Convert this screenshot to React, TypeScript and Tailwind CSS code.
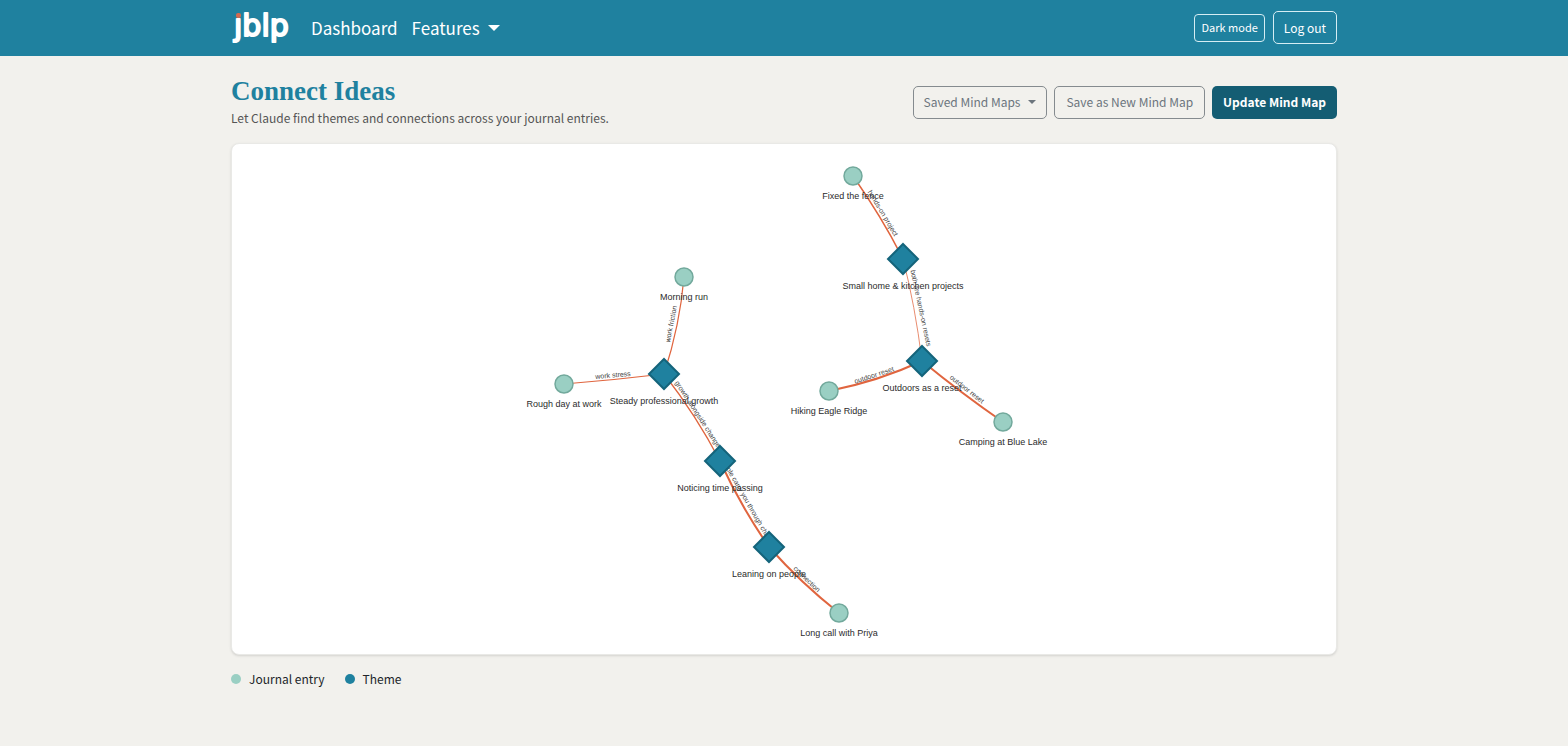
import React from 'react';

interface MapNode {
  id: string;
  label: string;
  x: number;
  y: number;
  kind: 'entry' | 'theme';
}

interface MapEdge {
  id: string;
  path: string;
  width: number;
  label: string;
  x: number;
  y: number;
  angle: number;
}

// Positions are in the canvas' own coordinates
const nodes: MapNode[] = [
  { id: 'fence', label: 'Fixed the fence', x: 622, y: 33, kind: 'entry' },
  { id: 'run', label: 'Morning run', x: 453, y: 134, kind: 'entry' },
  { id: 'rough', label: 'Rough day at work', x: 333, y: 241, kind: 'entry' },
  { id: 'hiking', label: 'Hiking Eagle Ridge', x: 598, y: 248, kind: 'entry' },
  { id: 'camping', label: 'Camping at Blue Lake', x: 772, y: 279, kind: 'entry' },
  { id: 'priya', label: 'Long call with Priya', x: 608, y: 470, kind: 'entry' },
  { id: 'home', label: 'Small home & kitchen projects', x: 672, y: 116, kind: 'theme' },
  { id: 'outdoors', label: 'Outdoors as a reset', x: 691, y: 218, kind: 'theme' },
  { id: 'growth', label: 'Steady professional growth', x: 433, y: 231, kind: 'theme' },
  { id: 'time', label: 'Noticing time passing', x: 489, y: 318, kind: 'theme' },
  { id: 'people', label: 'Leaning on people', x: 538, y: 404, kind: 'theme' },
];

const edges: MapEdge[] = [
  { id: 'e1', path: 'M622 33 Q652 76 672 116', width: 1.5, label: 'hands-on project', x: 652, y: 70, angle: 59 },
  { id: 'e2', path: 'M672 116 Q684 162 691 218', width: 0.75, label: 'both are hands-on resets', x: 690, y: 165, angle: 78 },
  { id: 'e3', path: 'M598 248 Q648 238 691 218', width: 2, label: 'outdoor reset', x: 643, y: 232, angle: -18 },
  { id: 'e4', path: 'M691 218 Q730 250 772 279', width: 2, label: 'outdoor reset', x: 736, y: 246, angle: 38 },
  { id: 'e5', path: 'M453 134 Q449 182 433 231', width: 1.25, label: 'work friction', x: 440, y: 181, angle: -79 },
  { id: 'e6', path: 'M333 241 Q383 237 433 231', width: 1.25, label: 'work stress', x: 382, y: 232, angle: -5 },
  { id: 'e7', path: 'M433 231 Q465 272 489 318', width: 1.25, label: 'growth alongside change', x: 467, y: 271, angle: 57 },
  { id: 'e8', path: 'M489 318 Q509 362 538 404', width: 2, label: 'people carry you through change', x: 517, y: 359, angle: 60 },
  { id: 'e9', path: 'M538 404 Q570 440 608 470', width: 2, label: 'connection', x: 576, y: 436, angle: 44 },
];

const Caret = ({ className }: { className: string }) => (
  <svg viewBox="0 0 10 5" className={className} aria-hidden="true">
    <path d="M0 0h10L5 5z" fill="currentColor" />
  </svg>
);

const Logo = () => (
  <svg viewBox="0 0 60 44" className="h-11 w-[60px]" role="img" aria-label="jblp">
    <text
      x="3"
      y="30"
      fontSize="30"
      fill="#fff"
      stroke="#fff"
      strokeWidth="2"
      strokeLinejoin="round"
      className="font-['DejaVu_Sans',sans-serif]"
    >
      jblp
    </text>
    <rect x="3" y="4" width="8" height="8" fill="#1f819f" />
    <rect x="5" y="7" width="5" height="5" rx="2" fill="#d4694f" />
  </svg>
);

const Navbar = () => (
  <nav className="border-b border-[#1f819f] bg-[#1f819f] text-white">
    <div className="mx-auto flex h-[55px] max-w-[1130px] items-center px-3">
      <a href="#" className="mr-5">
        <Logo />
      </a>
      <a href="#" className="mr-3.5 text-[17px]">
        Dashboard
      </a>
      <button type="button" className="flex items-center gap-2 text-[17px]">
        Features
        <Caret className="w-3" />
      </button>
      <div className="ml-auto flex items-center gap-2">
        <button type="button" className="h-7 rounded border border-[#d5edf3] px-1.5 text-[11px]">
          Dark mode
        </button>
        <button type="button" className="h-[33px] rounded-[5px] border border-[#d5edf3] px-2.5 text-xs">
          Log out
        </button>
      </div>
    </div>
  </nav>
);

const PageHeader = () => (
  <header className="flex items-center justify-between">
    <div>
      <h1 className="font-['Liberation_Serif',serif] text-[27px] leading-8 font-bold text-[#1f819f]">
        Connect Ideas
      </h1>
      <p className="text-xs leading-[22px] text-[#555]">
        Let Claude find themes and connections across your journal entries.
      </p>
    </div>
    <div className="flex gap-[7px] text-xs">
      <button
        type="button"
        className="flex h-[33px] items-center gap-2 rounded-[5px] border border-[#858b8f] px-2.5 text-[#6c757d]"
      >
        Saved Mind Maps
        <Caret className="w-2" />
      </button>
      <button type="button" className="h-[33px] rounded-[5px] border border-[#858b8f] px-[11px] text-[#6c757d]">
        Save as New Mind Map
      </button>
      <button type="button" className="h-[33px] rounded-[5px] bg-[#145d73] px-[11px] font-bold text-white">
        Update Mind Map
      </button>
    </div>
  </header>
);

const MindMap = () => (
  <section className="mt-3.5 overflow-hidden rounded-lg border border-[#e9e9e6] bg-white shadow-sm">
    <svg
      viewBox="1 1 1104 510"
      className="h-[510px] w-full font-['Liberation_Sans',sans-serif]"
      role="img"
      aria-label="Mind map of journal entries and themes"
    >
      {edges.map((edge) => (
        <g key={edge.id}>
          <path d={edge.path} fill="none" stroke="#e0653f" strokeWidth={edge.width} />
          <text
            x={edge.x}
            y={edge.y}
            fontSize="7"
            fill="#444"
            textAnchor="middle"
            dominantBaseline="central"
            transform={`rotate(${edge.angle} ${edge.x} ${edge.y})`}
          >
            {edge.label}
          </text>
        </g>
      ))}
      {nodes.map((node) =>
        node.kind === 'theme' ? (
          <g key={node.id}>
            <path
              d={`M${node.x} ${node.y - 15}l15 15l-15 15l-15-15z`}
              fill="#1f819f"
              stroke="#14647b"
              strokeWidth="2"
            />
            <text x={node.x} y={node.y + 30} fontSize="9" fill="#2b2b2b" textAnchor="middle">
              {node.label}
            </text>
          </g>
        ) : (
          <g key={node.id}>
            <circle cx={node.x} cy={node.y} r="9" fill="#9acfc3" stroke="#72a99c" strokeWidth="1.5" />
            <text x={node.x} y={node.y + 23} fontSize="9" fill="#2b2b2b" textAnchor="middle">
              {node.label}
            </text>
          </g>
        ),
      )}
    </svg>
  </section>
);

const Legend = () => (
  <ul className="mt-3.5 flex gap-5 text-xs leading-5 text-[#212529]">
    <li className="flex items-center gap-2">
      <span className="size-2.5 rounded-full bg-[#9acfc3]" />
      Journal entry
    </li>
    <li className="flex items-center gap-2">
      <span className="size-2.5 rounded-full bg-[#1f819f]" />
      Theme
    </li>
  </ul>
);

const App = () => {
  return (
    <div className="min-h-screen bg-[#f2f1ed] font-['Noto_Sans_CJK_SC',sans-serif]">
      <Navbar />
      <main className="mx-auto max-w-[1130px] px-3 pt-[19px] pb-12">
        <PageHeader />
        <MindMap />
        <Legend />
      </main>
    </div>
  );
};

export default App;
